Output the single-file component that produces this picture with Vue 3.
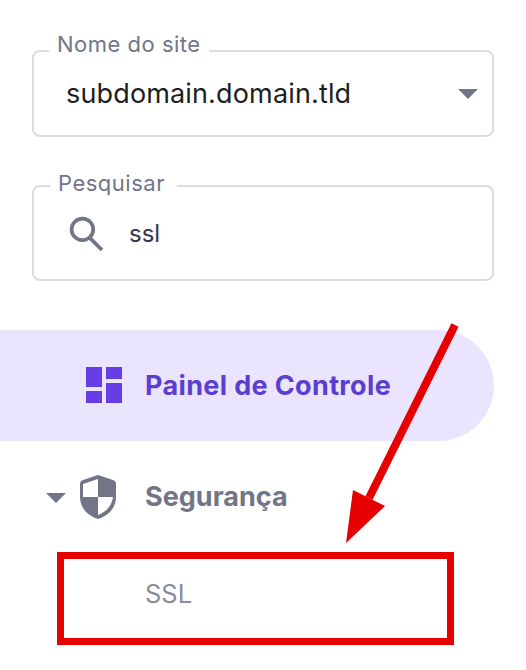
<template>
  <div class="page">
    <fieldset class="field site">
      <legend>Nome do site</legend>
      <span class="value">subdomain.domain.tld</span>
      <span class="caret"></span>
    </fieldset>

    <fieldset class="field search">
      <legend>Pesquisar</legend>
      <svg class="search-icon" viewBox="0 0 36 36" width="37" height="37">
        <circle cx="15" cy="14" r="10.5" fill="none" stroke="#727586" stroke-width="3.6" />
        <path d="M22 22 L34 34" stroke="#727586" stroke-width="3.6" fill="none" />
      </svg>
      <span class="query">ssl</span>
    </fieldset>

    <nav class="menu">
      <a class="item active">
        <svg class="dash-icon" viewBox="0 0 36 36" width="36" height="36">
          <path d="M0 0H16V20H0ZM20 0H36V12H20ZM20 16H36V36H20ZM0 24H16V36H0Z" fill="#673de6" />
        </svg>
        <span>Painel de Controle</span>
      </a>
      <a class="item group">
        <span class="arrow-down"></span>
        <svg class="shield" viewBox="0 0 36 44" width="36" height="44">
          <path d="M18 0 L33 5 Q36 6 36 9 V22 C36 33 28 41 18 44 C8 41 0 33 0 22 V9 Q0 6 3 5 Z" fill="#727586" />
          <path d="M18 4 V22 H3 V9 Z M18 22 H33 C32 31 26 37 18 40 Z" fill="#fff" />
        </svg>
        <span>Segurança</span>
      </a>
      <a class="sub-item">SSL</a>
    </nav>

    <svg class="pointer" viewBox="0 0 526 670" width="526" height="670">
      <path d="M455 325 L369 498" stroke="#e60000" stroke-width="8" fill="none" />
      <path d="M346 543 L353 490 L385 506 Z" fill="#e60000" />
    </svg>
  </div>
</template>

<script setup>
</script>

<style>
html, body { margin: 0; background: #fff; }
</style>

<style scoped>
.page {
  position: relative;
  width: 526px;
  height: 670px;
  padding-top: 32px;
  box-sizing: border-box;
  overflow: hidden;
  font-family: Inter, "Liberation Sans", sans-serif;
  color: #1d1e20;
}
.field {
  position: relative;
  width: 462px;
  margin: 0 0 0 32px;
  padding: 0;
  box-sizing: border-box;
  border: 2px solid #dadce0;
  border-radius: 8px;
  display: flex;
  align-items: center;
  min-width: 0;
}
.field legend {
  margin-left: 15px;
  padding: 0 8px 14px;
  font-size: 22px;
  line-height: 24px;
  color: #727586;
  letter-spacing: 0.5px;
}
.site { height: 105px; padding-bottom: 19px; }
.value { margin-left: 32px; font-size: 27px; letter-spacing: 0.15px; }
.caret {
  position: absolute;
  right: 14px;
  top: 19px;
  border-left: 10px solid transparent;
  border-right: 10px solid transparent;
  border-top: 10px solid #727586;
}
.search { height: 110px; margin-top: 34px; padding-bottom: 14px; }
.search legend { margin-left: 16px; padding-right: 12px; padding-bottom: 6px; }
.search-icon { flex: none; margin-left: 33px; }
.query { margin-left: 25px; font-size: 24px; color: #36344d; }
.menu { margin-top: 49px; }
.item {
  display: flex;
  align-items: center;
  font-size: 27px;
  font-weight: 700;
}
.active {
  width: 494px;
  height: 111px;
  box-sizing: border-box;
  padding-left: 86px;
  padding-bottom: 1px;
  background: #ebe4ff;
  border-radius: 0 56px 56px 0;
  color: #5a3ed0;
  letter-spacing: 0.35px;
}
.active span { margin-left: 23px; }
.dash-icon { flex: none; }
.group {
  height: 111px;
  padding-left: 46px;
  color: #727586;
}
.arrow-down {
  border-left: 10px solid transparent;
  border-right: 10px solid transparent;
  border-top: 10px solid #727586;
  margin-top: 2px;
}
.shield { flex: none; margin-left: 14px; }
.group span:last-child { margin-left: 29px; }
.sub-item {
  display: flex;
  align-items: center;
  width: 397px;
  height: 93px;
  box-sizing: border-box;
  margin-left: 57px;
  padding: 0 0 10px 81px;
  border: 7px solid #e60000;
  font-size: 25.5px;
  color: #8a8c9a;
}
.pointer {
  position: absolute;
  left: 0;
  top: 0;
  pointer-events: none;
}
</style>
